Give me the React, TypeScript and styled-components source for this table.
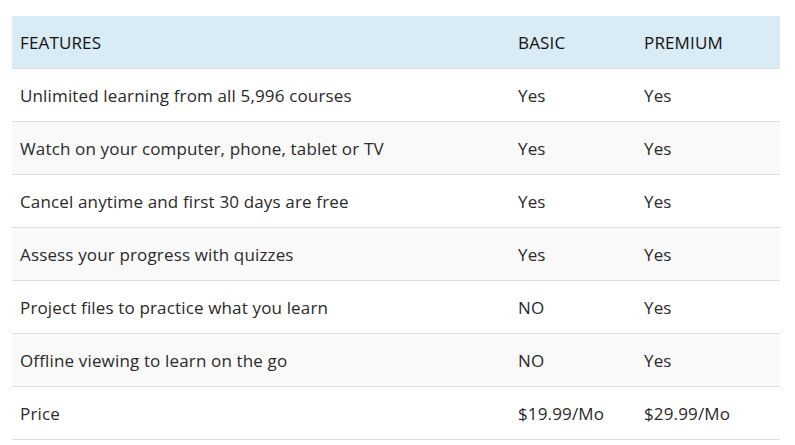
import React from 'react';
import styled, { createGlobalStyle } from 'styled-components';

const GlobalStyle = createGlobalStyle`
  body {
    margin: 0;
    background: #fff;
    font-family: "Open Sans", "Noto Sans", sans-serif;
  }
`;

const Wrapper = styled.div`
  padding: 16px 15px 0 12px;
`;

const Table = styled.table`
  width: 768px;
  border-collapse: collapse;
  table-layout: fixed;
  color: #2a2a2a;
  font-size: 17px;
  letter-spacing: 0.15px;
`;

const HeadRow = styled.tr`
  background: #d9ebf5;
`;

const HeadCell = styled.th<{ $width: number }>`
  width: ${p => p.$width}px;
  height: 52px;
  padding: 1px 8px 0;
  text-align: left;
  font-weight: 400;
  color: #111;
  border-bottom: 1px solid #ddd;
  box-sizing: border-box;
`;

const Row = styled.tr<{ $striped: boolean }>`
  background: ${p => (p.$striped ? '#f9f9f9' : '#fff')};
`;

const Cell = styled.td`
  height: 53px;
  padding: 1px 8px 0;
  border-bottom: 1px solid #ddd;
  vertical-align: middle;
  box-sizing: border-box;
`;

const rows: [string, string, string][] = [
  ['Unlimited learning from all 5,996 courses', 'Yes', 'Yes'],
  ['Watch on your computer, phone, tablet or TV', 'Yes', 'Yes'],
  ['Cancel anytime and first 30 days are free', 'Yes', 'Yes'],
  ['Assess your progress with quizzes', 'Yes', 'Yes'],
  ['Project files to practice what you learn', 'NO', 'Yes'],
  ['Offline viewing to learn on the go', 'NO', 'Yes'],
  ['Price', '$19.99/Mo', '$29.99/Mo'],
];

export default function App() {
  return (
    <>
      <GlobalStyle />
      <Wrapper>
        <Table>
          <thead>
            <HeadRow>
              <HeadCell $width={498}>FEATURES</HeadCell>
              <HeadCell $width={126}>BASIC</HeadCell>
              <HeadCell $width={144}>PREMIUM</HeadCell>
            </HeadRow>
          </thead>
          <tbody>
            {rows.map((r, i) => (
              <Row key={i} $striped={i % 2 === 1}>
                <Cell>{r[0]}</Cell>
                <Cell>{r[1]}</Cell>
                <Cell>{r[2]}</Cell>
              </Row>
            ))}
          </tbody>
        </Table>
      </Wrapper>
    </>
  );
}
